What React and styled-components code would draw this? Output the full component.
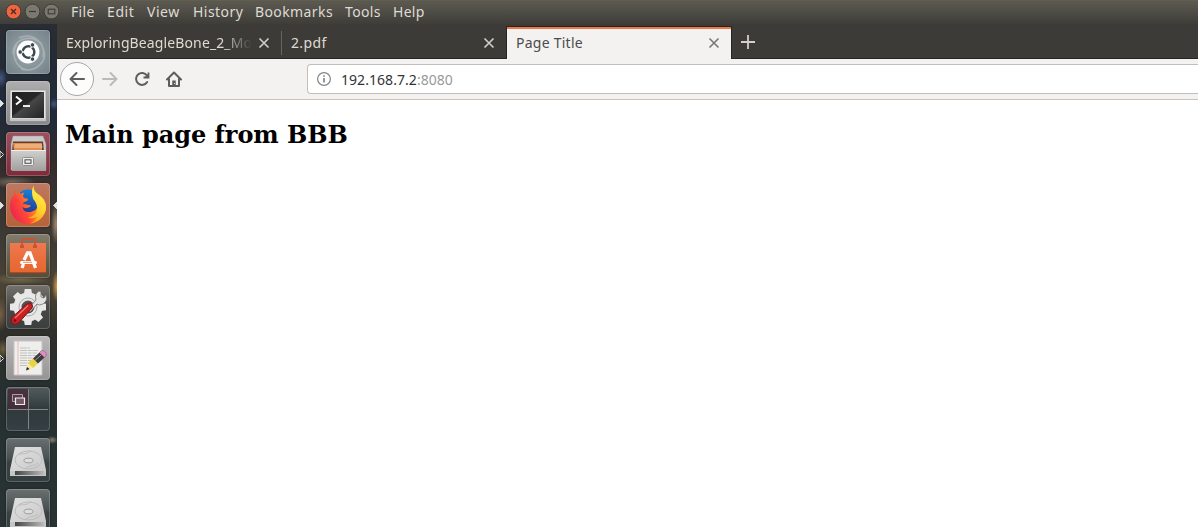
import React from "react";
import styled, { createGlobalStyle } from "styled-components";

const Global = createGlobalStyle`
  * { box-sizing: border-box; }
  body { margin: 0; overflow: hidden; background: #fff; }
`;

const Desktop = styled.div`
  display: flex;
  flex-direction: column;
  width: 100vw;
  height: 100vh;
  overflow: hidden;
  font-family: "Noto Sans", "Open Sans", sans-serif;
  font-size: 14px;
`;

const MenuBar = styled.header`
  display: flex;
  align-items: center;
  flex: none;
  height: 24px;
  padding-left: 5px;
  background: linear-gradient(#66644f 0, #5b594f 1px, #57554d 5px, #3f3e39 23px);
`;

const WindowButtons = styled.div`
  display: flex;
  gap: 3px;
  width: 66px;
  svg { display: block; }
`;

const MenuItem = styled.span`
  flex: none;
  width: ${(p) => p.$width}px;
  margin-right: 12px;
  line-height: 24px;
  height: 24px;
  letter-spacing: ${(p) => p.$spacing || 0}px;
  white-space: nowrap;
  color: #dfdbd2;
`;

const Workspace = styled.div`
  display: flex;
  flex: 1;
  min-height: 0;
`;

const Launcher = styled.nav`
  display: flex;
  flex-direction: column;
  flex: none;
  gap: 7px;
  width: 57px;
  padding: 6px 0 0 6px;
  overflow: hidden;
  background:
    radial-gradient(ellipse 5px 16px at 57px 262px, #d79a42, transparent),
    radial-gradient(ellipse 5px 20px at 56px 200px, #a58a6c, transparent),
    radial-gradient(ellipse 6px 4px at 52px 416px, #858572, transparent),
    radial-gradient(ellipse 6px 10px at 1px 54px, #435681, transparent),
    radial-gradient(ellipse 5px 6px at 54px 80px, #465778, transparent),
    radial-gradient(ellipse 24px 6px at 12px 158px, #756960, transparent),
    radial-gradient(ellipse 30px 6px at 20px 255px, #756a50, transparent),
    radial-gradient(ellipse 8px 18px at 0 290px, #786048, transparent),
    radial-gradient(ellipse 8px 10px at 3px 325px, #6e603f, transparent),
    linear-gradient(#292d33 0, #202a3a 18%, #332d2b 28%, #3d3934 42%, #4b4435 53%, #302f2b 61%, #27302f 72%, #293334 100%);
`;

const Tile = styled.div`
  position: relative;
  flex: none;
  width: 44px;
  height: 44px;
  border-radius: 4px;
  background: ${(p) => p.$fill};
  box-shadow: inset 0 0 0 1px rgba(255, 255, 255, 0.2), 0 0 2px rgba(0, 0, 0, 0.5);
  svg { display: block; }
`;

const Pip = styled.span`
  position: absolute;
  top: 18px;
  ${(p) => (p.$right ? "right: -7px;" : "left: -6px;")}
  width: 5px;
  height: 9px;
  svg { display: block; }
`;

const Browser = styled.main`
  display: flex;
  flex-direction: column;
  flex: 1;
  min-width: 0;
  background: #fff;
`;

const TabStrip = styled.div`
  display: flex;
  flex: none;
  height: 35px;
  background: #3c3b37;
  box-shadow: inset 0 -1px #252521;
`;

const Tab = styled.div`
  display: flex;
  align-items: center;
  flex: none;
  width: 225px;
  height: 35px;
  padding: 3px 12px 0 9px;
  color: #dfdbd2;
`;

const ActiveTab = styled(Tab)`
  width: 226px;
  height: 33px;
  margin: 2px 0 0 -1px;
  padding: 0 11px 0 9px;
  border: solid #252521;
  border-width: 1px 1px 0;
  background: linear-gradient(#f07746 2px, #f4f2f1 2px);
  color: #4c4c4c;
`;

const TabTitle = styled.span`
  flex: 1;
  width: 186px;
  overflow: hidden;
  white-space: nowrap;
  line-height: 20px;
  letter-spacing: ${(p) => p.$spacing || 0}px;
  ${(p) => p.$fade && "mask-image: linear-gradient(90deg, #000 156px, transparent 186px);"}
`;

const TabDivider = styled.i`
  width: 1px;
  height: 24px;
  margin: 7px 0 0 -1px;
  background: #67655f;
`;

const NewTab = styled.div`
  padding: 11px 0 0 9px;
  svg { display: block; }
`;

const Toolbar = styled.div`
  display: flex;
  align-items: center;
  flex: none;
  height: 41px;
  padding-left: 3px;
  border-bottom: 1px solid #c8c3be;
  background: #f4f2f1;
`;

const NavButtons = styled.div`
  display: flex;
  align-items: center;
  width: 247px;
  svg { display: block; flex: none; }
`;

const BackButton = styled.div`
  display: grid;
  place-items: center;
  width: 34px;
  height: 34px;
  margin-right: 8px;
  border: 1px solid #a9a7a5;
  border-radius: 50%;
  background: #fcfcfc;
`;

const NavIcon = styled.div`
  margin-right: 16px;
`;

const AddressBar = styled.div`
  display: flex;
  align-items: center;
  flex: 1;
  height: 30px;
  padding-left: 9px;
  border: 1px solid #c3beb9;
  border-right: 0;
  border-radius: 4px 0 0 4px;
  background: #fff;
  color: #333;
  font-size: 14px;
`;

const Url = styled.span`
  margin-left: 10px;
  padding-top: 1px;
  white-space: nowrap;
  letter-spacing: 0.05px;
`;

const Port = styled.span`
  color: #999;
`;

const PageHeading = styled.h1`
  margin: 21px 8px;
  font: bold 24px/28px "DejaVu Serif", serif;
  letter-spacing: -0.03px;
  color: #000;
`;

const Cross = ({ color }) => (
  <svg width="12" height="12" viewBox="0 0 12 12">
    <path d="M1.5 1.5l9 9M10.5 1.5l-9 9" stroke={color} strokeWidth="1.6" />
  </svg>
);

const WindowButton = ({ kind }) => (
  <svg width="16" height="18" viewBox="0 0 16 18">
    <circle cx="8.5" cy="8.5" r="7.4" fill={kind === "close" ? "#ed6641" : "#7b796f"} stroke="#34332e" strokeWidth=".8" />
    {kind === "close" && <path d="M6 6l5 5m0-5l-5 5" stroke="#4a281d" strokeWidth="1.3" />}
    {kind === "min" && <path d="M5 8.5h7" stroke="#3b3a35" strokeWidth="1.2" />}
    {kind === "max" && <rect x="5.2" y="6.2" width="6.6" height="4.6" fill="none" stroke="#3b3a35" strokeWidth="1.1" />}
  </svg>
);

const Glyph = ({ children }) => (
  <svg width="44" height="44" viewBox="0 0 44 44">{children}</svg>
);

const UbuntuGlyph = () => (
  <Glyph>
    <g fill="none" stroke="#fff" strokeOpacity=".25" strokeWidth="1.5">
      <path d="M7 24C7 9 24 3 36 14M13 8c15-7 27 7 24 19M36 16c8 15-6 27-21 23M28 39C13 43 3 28 11 14" />
    </g>
    <circle cx="22" cy="22" r="11.4" fill="#fff" />
    <circle cx="22.5" cy="22" r="5.8" fill="none" stroke="#3c4a50" strokeWidth="2.6" />
    <path d="M22.5 22H12M22.5 22l5-9M22.5 22l5 9" stroke="#fff" strokeWidth="1.3" />
    <circle cx="22.5" cy="22" r="4.3" fill="#fff" />
    {[[14.2, 22], [26.5, 14.9], [26.5, 29.1]].map(([x, y]) => (
      <circle key={y} cx={x} cy={y} r="2.2" fill="#3c4a50" stroke="#fff" strokeWidth=".8" />
    ))}
  </Glyph>
);

const TerminalGlyph = () => (
  <Glyph>
    <defs><linearGradient id="screen" x2="1" y2="1"><stop stopColor="#222" /><stop offset=".45" stopColor="#262626" /><stop offset=".5" stopColor="#474747" /><stop offset="1" stopColor="#222" /></linearGradient></defs>
    <path d="M4 9h36v31H4z" fill="#e4e4e4" stroke="#999" strokeWidth=".7" />
    <path d="M6 11h32v26H6z" fill="url(#screen)" />
    <path d="M4 37.5h36V40H4z" fill="#c4c4c4" />
    <path d="M10 15.5l5 4-5 4" fill="none" stroke="#fff" strokeWidth="2" />
    <path d="M17 25h7" stroke="#fff" strokeWidth="1.8" />
  </Glyph>
);

const FilesGlyph = () => (
  <Glyph>
    <defs><linearGradient id="drawer" x2="0" y2="1"><stop stopColor="#d0d0cf" /><stop offset="1" stopColor="#a09f9d" /></linearGradient></defs>
    <path d="M7 4h30l3 8v26H5V12z" fill="#cbc9c8" stroke="#9c9292" strokeWidth=".5" />
    <path d="M7 9.5h30l1 10H6z" fill="#5e3e34" />
    <path d="M7 11h29v8H8z" fill="#e38c50" /><path d="M9 13h27M8.5 15h28" stroke="#f9d19e" strokeWidth="1" />
    <path d="M5 18h35v21H6z" fill="url(#drawer)" />
    <path d="M5 18.5h35" stroke="#efefef" />
    <rect x="16.5" y="25.5" width="11" height="8" rx="1" fill="#eee" stroke="#8e8e8e" />
    <rect x="19" y="27.8" width="6" height="3.5" fill="#eee" stroke="#555" strokeWidth="1.1" />
  </Glyph>
);

const FirefoxGlyph = () => (
  <Glyph>
    <defs>
      <linearGradient id="fox" x1=".9" x2=".1" y1=".3" y2=".7"><stop stopColor="#ffc22a" /><stop offset=".35" stopColor="#ff8a22" /><stop offset=".65" stopColor="#ff4a36" /><stop offset="1" stopColor="#f02a4c" /></linearGradient>
      <linearGradient id="tail" x1=".6" x2=".3" y2="1"><stop stopColor="#fff25a" /><stop offset=".55" stopColor="#ffd42a" /><stop offset="1" stopColor="#ff9a20" /></linearGradient>
      <linearGradient id="globe" x1=".6" x2=".4" y2="1"><stop stopColor="#1583dc" /><stop offset="1" stopColor="#263a94" /></linearGradient>
    </defs>
    <path d="M9 7c0 2.500.5 4 1.500 5C14 8 20 6 26 8c8 3 14 8 14 15 0 10-8 18-18 18S4 33 4 23.500C4 18 6 14 8 12q-.5-3 1-5z" fill="url(#fox)" />
    <path d="M14 9.500C17 6.500 23 5.500 28 8c3 4 5 9 4 14-1 5-5 7-9 7-4 0-6-2-6.500-5 3 2 5 1 7 0 1.500-.5 1.500-2-.5-2-2 0-3-1.500-6-1 0-2 2-2 4.500-3.500.5-1 .5-2-.5-2-2.500 0-3-.5-4-2 0-1.500.5-2.500 1.500-4-1.500 0-3 .5-4.500 1.500z" fill="url(#globe)" />
    <path d="M28 2.500c-1 3 0 5 3 8 7 6 9 9 9 15-1 8-8 14-16 15 4-2 6-4 7-7-3 2-6 2.500-9 1 7-1 10-6 9-11-.5-3-1.500-5-3.500-7C26 13 25 6 28 2.500z" fill="url(#tail)" />
  </Glyph>
);

const SoftwareGlyph = () => (
  <Glyph>
    <defs><linearGradient id="bag" x2="0" y2="1"><stop stopColor="#ee7850" /><stop offset="1" stopColor="#e6662d" /></linearGradient></defs>
    <path d="M4 9h36v30H4z" fill="url(#bag)" /><path d="M4 38.5h36" stroke="#bc451e" />
    <path d="M16 13V7q0-2 2-2h9q2 0 2 2v6" fill="none" stroke="#c75534" strokeWidth="1.8" />
    <path d="M14 11h4v3h-4zm13 0h4v3h-4z" fill="#c75534" />
    <path d="M18 26l3.500-7h2.500l5.500 15M16 34l1.500-4" fill="none" stroke="#fff" strokeWidth="3.3" />
    <path d="M15.500 28.500h14" stroke="#fff" strokeWidth="3" strokeLinecap="round" />
    <path d="M17 28.300h9" stroke="#e9703f" strokeWidth=".8" />
  </Glyph>
);

const SettingsGlyph = () => (
  <Glyph>
    <g fill="#e8e8e8">
      {[0, 45, 90, 135, 180, 225, 270, 315].map((a) => (
        <path key={a} d="M17.700 11l1-7h6.600l1 7z" transform={`rotate(${a} 22 22)`} />
      ))}
    </g>
    <circle cx="22" cy="22" r="10.500" fill="none" stroke="#e8e8e8" strokeWidth="8" />
    <circle cx="22" cy="22" r="9" fill="none" stroke="#aaa" strokeWidth="1" />
    <path d="M22 24l8-9q-2-6 3-9l2 1v5l3 1 2-3q2 6-3 9-4 2-6 0l-7 8z" fill="#e2e2e2" stroke="#747474" strokeWidth=".8" />
    <path d="M21.500 18.500q2-1.500 4 .5t.5 4L13 37.500q-4 3.500-7 .5-2.500-3.500 1-6.500z" fill="#c71f22" stroke="#831316" />
    <path d="M22 20.500L9 33" stroke="#ee7772" strokeWidth="1.4" />
    <circle cx="9" cy="35.500" r="1.200" fill="#5c1212" />
  </Glyph>
);

const EditorGlyph = () => (
  <Glyph>
    <path d="M8 5h28v34H8z" fill="#eeeeec" stroke="#c6c4c4" />
    <path d="M12 5v34" stroke="#e7a5a5" strokeWidth=".7" />
    <g stroke="#b5b5b5" strokeWidth=".8" strokeDasharray="7 .7 4 .7">
      {[12, 14.5, 17, 19.5, 22, 24.5, 27, 29.5].map((y, i) => <path key={y} d={`M14 ${y}h${[10, 18, 17, 18, 13, 18, 16, 10][i]}`} />)}
    </g>
    <path d="M20 34.500l2-7.500 5 5z" fill="#ffe5a1" /><path d="M20 34.500l1-3.500 2.500 2z" fill="#222" />
    <path d="M22 27l5-4.500 5 5-5 4.500z" fill="#ead345" />
    <path d="M27 22.500l6.500-6 5 5-6.500 6z" fill="#3c3c3c" /><path d="M29 24.500l6.500-6" stroke="#999" />
    <path d="M33.500 16.500l2-2q4-.5 5 4.500l-2 2.500z" fill="#e58ac4" stroke="#8f678a" strokeWidth=".7" />
  </Glyph>
);

const WorkspaceGlyph = () => (
  <Glyph>
    <path d="M2 2h20v20H2z" fill="#482c3a" opacity=".85" />
    <path d="M22.500 2v40M2 22.500h40" stroke="#7f8688" />
    <path d="M6.500 7.500h10v7h-10z" fill="#563b47" stroke="#aaa0a6" />
    <path d="M9.500 11h9v6.500h-9z" fill="#705761" stroke="#eee" strokeWidth="1.2" />
  </Glyph>
);

const DriveGlyph = () => (
  <Glyph>
    <defs>
      <linearGradient id="drive" x2="1" y2="1"><stop stopColor="#e2e2e2" /><stop offset="1" stopColor="#c6c6c6" /></linearGradient>
      <linearGradient id="driveEdge"><stop stopColor="#444" /><stop offset="1" stopColor="#bbb" /></linearGradient>
    </defs>
    <path d="M9 9h26l5 23v5H4v-5z" fill="url(#drive)" />
    <path d="M4 33h36v5H4z" fill="#c5c5c5" /><path d="M9 33h29v4H9z" fill="url(#driveEdge)" />
    <ellipse cx="22.500" cy="22" rx="13.500" ry="9" fill="none" stroke="#bbb" />
    <path d="M13 17c4-3 7 1 12-5M32 25c-4 4-7 1-12 5" stroke="#bdbdbd" fill="none" />
    <ellipse cx="22.500" cy="22.500" rx="4.500" ry="2.300" fill="#ddd" stroke="#9a9a9a" />
  </Glyph>
);

const glass = "linear-gradient(#6a7070 0, #4a5152 45%, #394142 55%, #343e40)";
const launcherItems = [
  { Icon: UbuntuGlyph, fill: "radial-gradient(circle, #9eaaae, #718087)" },
  { Icon: TerminalGlyph, fill: "linear-gradient(#adadad, #888)", pip: "filled" },
  { Icon: FilesGlyph, fill: "linear-gradient(#9b5260, #7d2a3b)", pip: "hollow" },
  { Icon: FirefoxGlyph, fill: "linear-gradient(#bd7961, #b66239)", pip: "filled", active: true },
  { Icon: SoftwareGlyph, fill: "linear-gradient(#837c6c, #544b38)" },
  { Icon: SettingsGlyph, fill: "linear-gradient(#76736d, #494946 50%, #393f3f)" },
  { Icon: EditorGlyph, fill: "linear-gradient(#bab7b9, #969395)", pip: "hollow" },
  { Icon: WorkspaceGlyph, fill: "linear-gradient(#535b5d, #30393c 50%, #354044)" },
  { Icon: DriveGlyph, fill: glass },
  { Icon: DriveGlyph, fill: glass },
];

const menus = [
  ["File", 24, 0.3], ["Edit", 28, 0.6], ["View", 34, 0.5], ["History", 50, 0.45],
  ["Bookmarks", 78, 0.4], ["Tools", 36, 0.35], ["Help", 32, 0.3],
];

export default function App() {
  return (
    <Desktop>
      <Global />
      <MenuBar>
        <WindowButtons>
          <WindowButton kind="close" /><WindowButton kind="min" /><WindowButton kind="max" />
        </WindowButtons>
        {menus.map(([label, width, spacing]) => (
          <MenuItem key={label} $width={width} $spacing={spacing}>{label}</MenuItem>
        ))}
      </MenuBar>
      <Workspace>
        <Launcher>
          {launcherItems.map(({ Icon, fill, pip, active }, i) => (
            <Tile key={i} $fill={fill}>
              <Icon />
              {pip && (
                <Pip><svg width="5" height="9"><path d="M0 1l3.500 3.500L0 8z" fill={pip === "filled" ? "#e3e3e3" : "#292724"} stroke="#ddd" /></svg></Pip>
              )}
              {active && (
                <Pip $right><svg width="5" height="9"><path d="M5 1L1.500 4.500 5 8z" fill="#e3e3e3" stroke="#ddd" /></svg></Pip>
              )}
            </Tile>
          ))}
        </Launcher>
        <Browser>
          <TabStrip>
            <Tab><TabTitle $fade $spacing={0.12}>ExploringBeagleBone_2_Mo</TabTitle><Cross color="#d3d0c8" /></Tab>
            <TabDivider />
            <Tab><TabTitle $spacing={0.35}>2.pdf</TabTitle><Cross color="#d3d0c8" /></Tab>
            <ActiveTab><TabTitle $spacing={0.25}>Page Title</TabTitle><Cross color="#777" /></ActiveTab>
            <NewTab><svg width="14" height="14"><path d="M7 0v14M0 7h14" stroke="#d3d0c8" strokeWidth="1.8" /></svg></NewTab>
          </TabStrip>
          <Toolbar>
            <NavButtons>
              <BackButton>
                <svg width="16" height="16" fill="none" stroke="#5d5d5d" strokeWidth="2" strokeLinecap="round" strokeLinejoin="round"><path d="M15 8H1.500M7.500 2l-6 6 6 6" /></svg>
              </BackButton>
              <NavIcon>
                <svg width="16" height="16" fill="none" stroke="#bcbab8" strokeWidth="2" strokeLinecap="round" strokeLinejoin="round"><path d="M1 8h13.500M8.500 2l6 6-6 6" /></svg>
              </NavIcon>
              <NavIcon>
                <svg width="16" height="16" fill="none" stroke="#5d5d5d" strokeWidth="2"><path d="M13 4.500A6 6 0 1 0 13.200 11" strokeLinecap="round" /><path d="M14.500 1.500V6.500H9.500" strokeWidth="1.8" /><path d="M15 2v5h-5z" fill="#5d5d5d" stroke="none" /></svg>
              </NavIcon>
              <NavIcon>
                <svg width="16" height="16" fill="none" stroke="#5d5d5d" strokeWidth="2" strokeLinecap="round" strokeLinejoin="round"><path d="M1 8.500L8 1.500l7 7M3 8v7h10V8" /><path d="M8 15v-5.500" strokeWidth="3.5" strokeLinecap="butt" /><path d="M8.500 12v1" stroke="#d5d3d2" strokeWidth="1" strokeLinecap="butt" /></svg>
              </NavIcon>
            </NavButtons>
            <AddressBar>
              <svg width="14" height="14" fill="none" stroke="#858585"><circle cx="7" cy="7" r="6.4" strokeWidth="1.2" /><path d="M7 6v4.500M7 3.200v1.600" strokeWidth="1.7" /></svg>
              <Url>192.168.7.2<Port>:8080</Port></Url>
            </AddressBar>
          </Toolbar>
          <PageHeading>Main page from BBB</PageHeading>
        </Browser>
      </Workspace>
    </Desktop>
  );
}
